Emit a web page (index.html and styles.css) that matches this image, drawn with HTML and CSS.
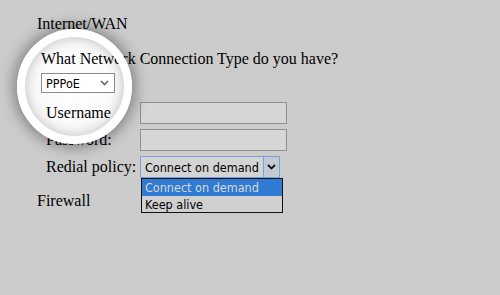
FILE: index.html
```html
<!DOCTYPE html>
<html lang="en">
<head>
  <meta charset="UTF-8">
  <title>Internet/WAN</title>
  <link rel="stylesheet" href="styles.css">
</head>
<body>
  <div class="page">
    <div class="spot-bg"></div>
    <div class="content">
      <div class="section">Internet/WAN</div>
      <div class="question">What Network Connection Type do you have?</div>
      <div class="select type-select">
        <span>PPPoE</span>
        <svg class="chev" width="9" height="6" viewBox="0 0 9 6"><path d="M1 1 L4.5 4.5 L8 1" fill="none" stroke="#666" stroke-width="1.6"/></svg>
      </div>
      <div class="form">
        <div class="row">
          <span class="label">Username</span>
          <span class="input"></span>
        </div>
        <div class="row">
          <span class="label">Password:</span>
          <span class="input"></span>
        </div>
        <div class="row">
          <span class="label">Redial policy:</span>
          <div class="redial">
            <div class="select redial-select">
              <span class="value">Connect on demand</span>
              <span class="arrow">
                <svg width="9" height="6" viewBox="0 0 9 6"><path d="M1 1 L4.5 4.5 L8 1" fill="none" stroke="#111" stroke-width="1.8"/></svg>
              </span>
            </div>
            <div class="options">
              <div class="option active">Connect on demand</div>
              <div class="option">Keep alive</div>
            </div>
          </div>
        </div>
      </div>
      <div class="section firewall">Firewall</div>
    </div>
    <div class="spot-ring"></div>
  </div>
</body>
</html>
```

FILE: styles.css
```css
body {
  margin: 0;
  background-color: #cccccc;
  font-family: "Liberation Serif", "Times New Roman", serif;
  font-size: 16px;
  color: #000;
}

.page {
  position: relative;
  height: 295px;
  overflow: hidden;
}

.content {
  position: relative;
  z-index: 1;
  padding: 15px 0 0 37px;
}

.section {
  line-height: 18px;
}

.question {
  margin: 17px 0 0 4px;
  line-height: 18px;
}

.select {
  display: flex;
  align-items: center;
  box-sizing: border-box;
  font-family: "DejaVu Sans Condensed", "DejaVu Sans", sans-serif;
  font-size: 12.5px;
  white-space: nowrap;
}

.type-select {
  width: 74px;
  height: 20px;
  margin: 5px 0 0 4px;
  padding: 0 5px 0 4px;
  border: 1px solid #8a8a8a;
  background-color: #fff;
  justify-content: space-between;
}

.form {
  margin: 9px 0 0 9px;
}

.row {
  display: flex;
  align-items: flex-start;
  height: 27px;
}

.label {
  width: 94px;
  line-height: 22px;
}

.input {
  width: 147px;
  height: 22px;
  box-sizing: border-box;
  border: 1px solid #8f8f8f;
  background-color: #d6d6d6;
}

.redial {
  position: relative;
}

.redial-select {
  width: 140px;
  height: 22px;
  border: 1px solid #7b9fd6;
  background-color: #d4d4d4;
  padding-left: 4px;
}

.value {
  flex: 1;
  overflow: hidden;
}

.arrow {
  display: flex;
  align-items: center;
  justify-content: center;
  flex: none;
  width: 15px;
  height: 100%;
  border-left: 1px solid #7b9fd6;
  background-color: #c4cad4;
}

.options {
  position: absolute;
  left: 1px;
  top: 22px;
  width: 142px;
  box-sizing: border-box;
  border: 1px solid #111;
  background-color: #d0d0d0;
  font-family: "DejaVu Sans Condensed", "DejaVu Sans", sans-serif;
  font-size: 12.5px;
  white-space: nowrap;
}

.option {
  height: 16px;
  line-height: 17px;
  padding-left: 3px;
}

.option.active {
  height: 17px;
  background-color: #2f7bd3;
  color: #d8d8d8;
}

.firewall {
  margin-top: 9px;
}

.spot-bg,
.spot-ring {
  position: absolute;
  left: 17px;
  top: 29px;
  width: 115px;
  height: 115px;
  box-sizing: border-box;
  border-radius: 50%;
}

.spot-bg {
  z-index: 0;
  background: radial-gradient(circle, #ffffff 0%, #fafafa 45%, #dedede 75%, #cfcfcf 100%);
}

.spot-ring {
  z-index: 2;
  border: 8px solid #fff;
  box-shadow: 0 0 14px 4px rgba(0, 0, 0, 0.35), inset 0 0 10px rgba(0, 0, 0, 0.15);
  pointer-events: none;
}
```
